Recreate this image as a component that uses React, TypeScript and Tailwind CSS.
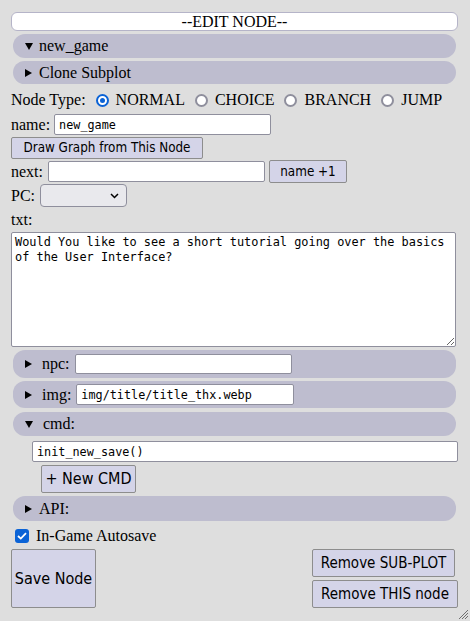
import React from "react";

const btn =
  "bg-[#d4d4e8] border border-[#8d8d8d] rounded-[2px] font-['DejaVu_Sans',sans-serif] font-stretch-condensed text-black flex items-center justify-center";
const inp =
  "bg-white border border-[#8f8f9d] rounded-[2px] px-[4px] font-['DejaVu_Sans_Mono',monospace] text-[11.8px] text-black outline-none";

const Tri = ({ open }: { open?: boolean }) =>
  open ? (
    <svg width="8" height="7" viewBox="0 0 8 7">
      <path d="M0 0H8L4 7Z" fill="#000" />
    </svg>
  ) : (
    <svg width="7" height="8" viewBox="0 0 7 8">
      <path d="M0 0L7 4L0 8Z" fill="#000" />
    </svg>
  );

const Radio = ({ on, label }: { on?: boolean; label: string }) => (
  <div className="flex items-center gap-[7px] mr-[10px]">
    {on ? (
      <span className="w-[13px] h-[13px] rounded-full border-2 border-[#0b63d6] bg-white flex items-center justify-center">
        <span className="w-[5px] h-[5px] rounded-full bg-[#0b63d6]" />
      </span>
    ) : (
      <span className="w-[13px] h-[13px] rounded-full border-2 border-[#8f8f9d] bg-white" />
    )}
    <span>{label}</span>
  </div>
);

const Bar = ({ className, children }: { className: string; children: React.ReactNode }) => (
  <div className={"mx-[2px] rounded-[12px] bg-[#bebdcf] flex items-center pl-[12px] " + className}>
    {children}
  </div>
);

export default function App() {
  return (
    <div className="relative w-[470px] h-[621px] bg-[#dedede] overflow-hidden font-['Liberation_Serif',serif] text-[16px] leading-[18px] text-black">
      <div className="pt-[12px] pl-[11px] pr-[12px] flex flex-col">
        <div className="h-[19px] rounded-[6px] border border-[#b5b4c8] bg-white text-center leading-[17px]">
          --EDIT NODE--
        </div>

        <Bar className="mt-[3px] h-[24px] gap-[6px]">
          <Tri open />
          <span>new_game</span>
        </Bar>
        <Bar className="mt-[3px] h-[23px] gap-[7px]">
          <Tri />
          <span>Clone Subplot</span>
        </Bar>

        <div className="mt-[6px] h-[20px] flex items-center">
          <span className="mr-[10px]">Node Type:</span>
          <Radio on label="NORMAL" />
          <Radio label="CHOICE" />
          <Radio label="BRANCH" />
          <Radio label="JUMP" />
        </div>

        <div className="mt-[4px] h-[21px] flex items-center gap-[4px]">
          <span>name:</span>
          <input className={inp + " w-[217px] h-[21px]"} defaultValue="new_game" />
        </div>

        <button className={btn + " mt-[2px] h-[22px] w-[192px] text-[13.33px]"}>
          Draw Graph from This Node
        </button>

        <div className="mt-[1px] h-[23px] flex items-center">
          <span className="mr-[5px]">next:</span>
          <input className={inp + " w-[217px] h-[21px]"} />
          <button className={btn + " ml-[4px] w-[78px] h-[23px] text-[13.33px]"}>name +1</button>
        </div>

        <div className="mt-[1px] h-[23px] flex items-center">
          <span className="mr-[5px]">PC:</span>
          <div className="w-[87px] h-[23px] rounded-[4px] border border-[#8f8f9d] bg-[#e9e9ed] flex items-center justify-end pr-[7px]">
            <svg width="9" height="6" viewBox="0 0 9 6">
              <path d="M1 1L4.5 4.5L8 1" stroke="#000" strokeWidth="1.5" fill="none" />
            </svg>
          </div>
        </div>

        <div className="mt-[4px] h-[18px]">txt:</div>

        <textarea
          className="mt-[3px] h-[115px] w-[445px] bg-white border border-[#8f8f9d] rounded-[2px] px-[3px] py-[2px] font-['DejaVu_Sans_Mono',monospace] text-[11.9px] leading-[15px] outline-none"
          defaultValue="Would You like to see a short tutorial going over the basics of the User Interface?"
        />

        <Bar className="mt-[3px] h-[28px]">
          <Tri />
          <span className="ml-[10px] mr-[5px]">npc:</span>
          <input className={inp + " w-[217px] h-[20px]"} />
        </Bar>
        <Bar className="mt-[3px] h-[27px]">
          <Tri />
          <span className="ml-[10px] mr-[5px]">img:</span>
          <input className={inp + " w-[218px] h-[21px]"} defaultValue="img/title/title_thx.webp" />
        </Bar>
        <Bar className="mt-[4px] h-[24px] gap-[10px]">
          <Tri open />
          <span>cmd:</span>
        </Bar>

        <input className={inp + " mt-[5px] ml-[21px] w-[426px] h-[21px]"} defaultValue="init_new_save()" />

        <button className={btn + " mt-[3px] ml-[30px] w-[95px] h-[28px] text-[16px]"}>+ New CMD</button>

        <Bar className="mt-[3px] h-[25px] gap-[7px]">
          <Tri />
          <span>API:</span>
        </Bar>

        <div className="mt-[7px] h-[16px] flex items-center gap-[7px] pl-[4px]">
          <span className="w-[14px] h-[14px] rounded-[3px] bg-[#0b63d6] flex items-center justify-center">
            <svg width="10" height="8" viewBox="0 0 10 8">
              <path d="M1 4L3.8 6.6L9 1.2" stroke="#fff" strokeWidth="1.8" fill="none" />
            </svg>
          </span>
          <span>In-Game Autosave</span>
        </div>

        <div className="mt-[5px] flex justify-between items-start">
          <button className={btn + " w-[85px] h-[59px] text-[16px]"}>Save Node</button>
          <div className="flex flex-col items-start gap-[3px] w-[146px]">
            <button className={btn + " w-[143px] h-[28px] text-[15px]"}>Remove SUB-PLOT</button>
            <button className={btn + " w-[146px] h-[28px] text-[15px]"}>Remove THIS node</button>
          </div>
        </div>
      </div>

      {/* resize grip */}
      <svg className="absolute right-[2px] bottom-[2px]" width="10" height="10" viewBox="0 0 10 10">
        <path d="M1 10L10 1M4 10L10 4M7 10L10 7" stroke="#6f6f6f" strokeWidth="1" />
      </svg>
    </div>
  );
}
